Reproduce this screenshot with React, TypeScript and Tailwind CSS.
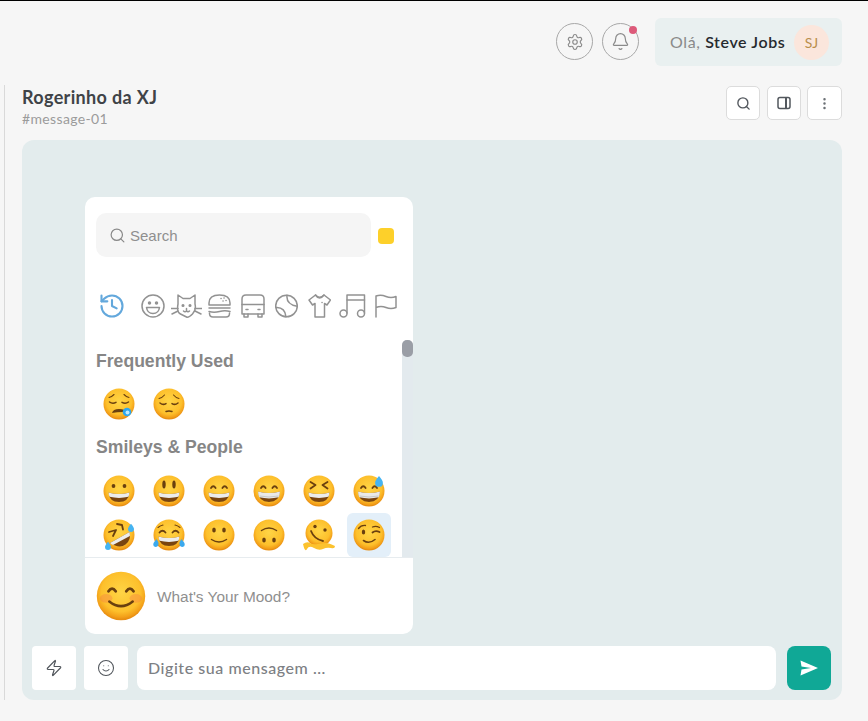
import React, { useId } from "react";
import { Settings, Bell, Search, EllipsisVertical, Zap, Smile, History } from "lucide-react";

type Kind = "sleepy" | "pensive" | "grin" | "smiley" | "smileEyes" | "beam" | "squint" | "sweat" | "rofl" | "joy" | "slight" | "upside" | "melt" | "wink" | "blush";

const ink = "#6a400f";

function Mouth() {
  return (
    <g>
      <path d="M5.500 17.500q10.500 3 21 0q-.8 9.500-10.500 9.500t-10.500-9.500Z" fill="#7a4510" />
      <path d="M5.500 17.500q10.500 3 21 0q-.2 2.500-1.100 4.300q-9.400 2.200-18.800 0q-.9-1.800-1.100-4.300Z" fill="#ececec" />
    </g>
  );
}

function BigMouth() {
  return (
    <g>
      <path d="M5 16.500q11 3 22 0q-.5 10.500-11 10.500t-11-10.500Z" fill="#7a4510" />
      <path d="M5 16.500q11 3 22 0q-.1 3.500-1.300 5.800q-9.700 2.200-19.400 0q-1.200-2.300-1.300-5.800Z" fill="#e9e9e9" />
      <path d="M6.500 21q9.500 2 19 0" fill="none" stroke="#b9b9b9" strokeWidth=".7" />
    </g>
  );
}

function HappyEyes() {
  return (
    <g fill="none" stroke={ink} strokeWidth="1.800" strokeLinecap="round">
      <path d="M8 13q2.300-3.500 4.600 0" />
      <path d="M19.400 13q2.300-3.500 4.600 0" />
    </g>
  );
}

function Tear({ x, y, s = 1 }: { x: number; y: number; s?: number }) {
  return (
    <path
      transform={`translate(${x} ${y}) scale(${s})`}
      d="M0-4.200C1.800-1.800 3-.5 3 1.100A3 3 0 0 1-3 1.100C-3-.5-1.800-1.800 0-4.200Z"
      fill="#45b4f2"
    />
  );
}

function Face({ kind, size = 32 }: { kind: Kind; size?: number }) {
  const id = useId();
  return (
    <svg width={size} height={size} viewBox="0 0 32 32" className="block shrink-0">
      <defs>
        <radialGradient id={id} cx="50%" cy="42%" r="56%">
          <stop offset="0%" stopColor="#ffd546" />
          <stop offset="72%" stopColor="#fdc02c" />
          <stop offset="92%" stopColor="#f3a019" />
          <stop offset="100%" stopColor="#e88e12" />
        </radialGradient>
      </defs>
      {kind === "melt" ? (
        <g>
          <circle cx="16" cy="14" r="13.500" fill={`url(#${id})`} />
          <path d="M0 25q4-3 7-1t8 1 8-1 9 3q0 3-4 2t-8 1-9-1-7 1-4-5Z" fill="#fcc22e" />
          <circle cx="12" cy="7.500" r="1.700" fill={ink} />
          <circle cx="22" cy="11" r="1.700" fill={ink} />
          <path d="M8 12q3 8 12 10" fill="none" stroke={ink} strokeWidth="1.800" strokeLinecap="round" />
        </g>
      ) : (
        <circle cx="16" cy="16" r="15.500" fill={`url(#${id})`} />
      )}
      {kind === "sleepy" && (
        <g>
          <g fill="none" stroke={ink} strokeWidth="1.500" strokeLinecap="round">
            <path d="M6.500 14q3 2.200 6.500.4" />
            <path d="M19 14.400q3.500 1.800 6.500-.4" />
            <path d="M6 9.500q2.500-.5 5-3M26 9.500q-2.500-.5-5-3" strokeWidth="1.100" />
          </g>
          <path d="M9 25q1-4 7-4t7 3q-7-.5-14 1Z" fill={ink} />
          <circle cx="24" cy="24" r="4.300" fill="#2fa7ee" />
          <circle cx="24.500" cy="24.500" r="2" fill="#bfeaff" />
        </g>
      )}
      {kind === "pensive" && (
        <g fill="none" stroke={ink} strokeWidth="1.500" strokeLinecap="round">
          <path d="M7 15q3 2.400 6 .6" />
          <path d="M19 15.600q3 1.800 6-.6" />
          <path d="M6 10.500q3-.5 5.500-3.500M26 10.500q-3-.5-5.500-3.500" strokeWidth="1.100" />
          <path d="M13 23.500q3-1.200 6 0" />
        </g>
      )}
      {kind === "grin" && (
        <g>
          <circle cx="10.500" cy="11" r="1.900" fill={ink} />
          <circle cx="21.500" cy="11" r="1.900" fill={ink} />
          <Mouth />
        </g>
      )}
      {kind === "smiley" && (
        <g>
          <ellipse cx="11" cy="9.500" rx="1.700" ry="3.900" fill={ink} />
          <ellipse cx="21" cy="9.500" rx="1.700" ry="3.900" fill={ink} />
          <Mouth />
        </g>
      )}
      {kind === "smileEyes" && (
        <g>
          <HappyEyes />
          <Mouth />
        </g>
      )}
      {kind === "beam" && (
        <g>
          <HappyEyes />
          <BigMouth />
        </g>
      )}
      {kind === "squint" && (
        <g>
          <g fill="none" stroke={ink} strokeWidth="1.800" strokeLinecap="round" strokeLinejoin="round">
            <path d="M7.500 7l5 3-5 3.500" />
            <path d="M24.500 7l-5 3 5 3.500" />
          </g>
          <Mouth />
        </g>
      )}
      {kind === "sweat" && (
        <g>
          <HappyEyes />
          <BigMouth />
          <Tear x={26} y={6.500} s={1.300} />
        </g>
      )}
      {kind === "rofl" && (
        <g>
          <g fill="none" stroke={ink} strokeWidth="1.800" strokeLinecap="round" strokeLinejoin="round">
            <path d="M6 13l7-2-3 6" />
            <path d="M14 5l5 1 1 4.500" />
          </g>
          <path d="M7 24L26.500 13q2 8-4 12.500t-15.500-1.500Z" fill="#7a4510" />
          <path d="M7 24L26.500 13q.6 2 .4 4L10 26q-2-1-3-2Z" fill="#ececec" />
          <Tear x={28} y={9} s={1} />
          <Tear x={5} y={27} s={1} />
        </g>
      )}
      {kind === "joy" && (
        <g>
          <g fill="none" stroke={ink} strokeWidth="1.800" strokeLinecap="round">
            <path d="M6.500 13.500q3-3.500 6 0" />
            <path d="M19.500 13.500q3-3.500 6 0" />
            <path d="M5 8.500q2.500-2 5-2.500M27 8.500q-2.500-2-5-2.500" strokeWidth="1.100" />
          </g>
          <Mouth />
          <path d="M3.500 20c-1.500 2.500-4 4-3 6.500s5 1.500 5-1.500-1-3-2-5Z" fill="#3ba9ee" />
          <path d="M28.500 20c1.500 2.500 4 4 3 6.500s-5 1.500-5-1.500 1-3 2-5Z" fill="#3ba9ee" />
        </g>
      )}
      {kind === "slight" && (
        <g>
          <ellipse cx="11" cy="11" rx="1.800" ry="2.500" fill={ink} />
          <ellipse cx="21" cy="11" rx="1.800" ry="2.500" fill={ink} />
          <path d="M8.500 20.500q7.500 5 15 0" fill="none" stroke={ink} strokeWidth="1.500" strokeLinecap="round" />
        </g>
      )}
      {kind === "upside" && (
        <g>
          <ellipse cx="11" cy="21" rx="1.800" ry="2.500" fill={ink} />
          <ellipse cx="21" cy="21" rx="1.800" ry="2.500" fill={ink} />
          <path d="M8.500 11.500q7.500-5 15 0" fill="none" stroke={ink} strokeWidth="1.500" strokeLinecap="round" />
        </g>
      )}
      {kind === "wink" && (
        <g>
          <g fill="none" stroke={ink} strokeLinecap="round">
            <path d="M5.500 9.500q2.500-3.500 7-3" strokeWidth="1.300" />
            <path d="M19.500 13.500q3-2.500 7-.5" strokeWidth="1.800" />
            <path d="M19.500 8q3.500-1.500 7 .5" strokeWidth="1.300" />
            <path d="M10.500 21.500q5.500 4 11.500-1" strokeWidth="1.600" />
          </g>
          <ellipse cx="10.500" cy="13" rx="1.700" ry="2.500" fill={ink} />
        </g>
      )}
      {kind === "blush" && (
        <g>
          <ellipse cx="6.500" cy="17.500" rx="4" ry="2.800" fill="#f4794a" opacity=".35" />
          <ellipse cx="25.500" cy="17.500" rx="4" ry="2.800" fill="#f4794a" opacity=".35" />
          <HappyEyes />
          <path d="M8.500 19.500q7.500 6 15 0" fill="none" stroke={ink} strokeWidth="1.600" strokeLinecap="round" />
        </g>
      )}
    </svg>
  );
}

const gray = "#929292";

function CatIcons() {
  const p = { fill: "none", stroke: gray, strokeWidth: 1.500, strokeLinecap: "round" as const, strokeLinejoin: "round" as const };
  return (
    <div className="flex items-center h-[28px]">
      <History size={28} color="#63a8dc" strokeWidth={1.800} className="shrink-0" />
      <svg width="24" height="24" viewBox="0 0 24 24" className="ml-[15px] shrink-0" {...p}>
        <circle cx="12" cy="12" r="11" />
        <circle cx="8.500" cy="9" r="1" fill={gray} />
        <circle cx="15.500" cy="9" r="1" fill={gray} />
        <path d="M5.500 13.500h13q-.8 6-6.500 6t-6.500-6Z" />
      </svg>
      <svg width="31" height="24" viewBox="0 0 31 24" className="ml-[6px] shrink-0" {...p}>
        <path d="M7 10V1l5 3.500h7L24 1v9q1.500 6-2.500 10T15.500 23t-6-3T7 10Z" />
        <path d="M0 14.500h7M1 20l6-3M31 14.500h-7M30 20l-6-3" />
        <circle cx="12" cy="11.500" r=".8" fill={gray} />
        <circle cx="19" cy="11.500" r=".8" fill={gray} />
        <path d="M12.500 17q1.500 1.500 3 0q1.500 1.500 3 0M15.500 14.500V17" />
      </svg>
      <svg width="23" height="24" viewBox="0 0 23 24" className="ml-[6px] shrink-0" {...p}>
        <path d="M1 11V9q0-8 10.500-8T22 9v2Z" />
        <path d="M1 14h21" />
        <path d="M1 17.500q5 1.500 10.500 0t10.500 0" />
        <path d="M1.500 19v.5q0 3.500 3.500 3.500h13q3.500 0 3.500-3.500V19" />
        <path d="M13 4.500h.1M16 4h.1M18 6.500h.1M15 7h.1" />
      </svg>
      <svg width="24" height="24" viewBox="0 0 24 24" className="ml-[10px] shrink-0" {...p}>
        <path d="M1 20V5q0-4 4-4h14q4 0 4 4v15Z" />
        <path d="M1 10.500h22" />
        <path d="M3 20v3h4v-3M17 20v3h4v-3" />
        <path d="M5 15.500h2M17 15.500h2" />
      </svg>
      <svg width="23" height="24" viewBox="0 0 23 24" className="ml-[10px] shrink-0" {...p}>
        <circle cx="11.500" cy="12" r="10.800" />
        <path d="M12 1.300q-1 9 10.200 11" />
        <path d="M1 13.500q9-.5 10 9.300" />
      </svg>
      <svg width="23" height="24" viewBox="0 0 23 24" className="ml-[10px] shrink-0" {...p}>
        <path d="M7.500 1L1 6l3.500 5 2.500-1.500V23h9.500V9.500L19 11l3.500-5L16 1q-4.500 4.500-8.500 0Z" />
        <path d="M7.500 1q4 6 8.500 0M14 8.500h.1" />
      </svg>
      <svg width="27" height="24" viewBox="0 0 27 24" className="ml-[8px] shrink-0" {...p}>
        <path d="M8 19V1h17.500v18" />
        <path d="M8 6h17.500" />
        <circle cx="4.500" cy="19.500" r="3.500" />
        <circle cx="22" cy="19.500" r="3.500" />
      </svg>
      <svg width="22" height="24" viewBox="0 0 22 24" className="ml-[9px] shrink-0" {...p}>
        <path d="M1 23V2q5-1.500 10 .5t10 0v11q-5 2-10 0t-10 0" />
      </svg>
    </div>
  );
}

function Cell({ kind, active }: { kind: Kind; active?: boolean }) {
  return (
    <div className="w-[50px] h-[44px] flex items-center justify-center">
      <div className={`w-[44px] h-[44px] rounded-[6px] flex items-center justify-center ${active ? "bg-[#e3eff9]" : ""}`}>
        <Face kind={kind} size={32} />
      </div>
    </div>
  );
}

function Picker() {
  const r1: Kind[] = ["sleepy", "pensive"];
  const r2: Kind[] = ["grin", "smiley", "smileEyes", "beam", "squint", "sweat", "rofl", "joy", "slight", "upside", "melt", "wink"];
  return (
    <div className="w-[328px] h-[437px] bg-white rounded-[10px] flex flex-col overflow-hidden font-['Liberation_Sans',sans-serif]">
      <div className="flex items-center gap-[7px] pl-[11px] pt-[16px]">
        <div className="w-[275px] h-[44px] rounded-[10px] bg-[#f5f5f5] flex items-center pl-[13px] gap-[4px]">
          <Search size={17} color="#8a8a8a" strokeWidth={1.700} />
          <span className="text-[15px] leading-[20px] mt-[2px] text-[#8f8f8f]">Search</span>
        </div>
        <div className="w-[16px] h-[16px] mt-[2px] rounded-[4px] bg-[#fdd02a]" />
      </div>
      <div className="pl-[13px] pt-[35px]">
        <CatIcons />
      </div>
      <div className="flex flex-1 min-h-0 mt-[20px]">
        <div className="flex-1 pl-[9px] min-w-0">
          <div className="pl-[2px] h-[20px] flex items-center text-[17.600px] font-bold text-[#868686] mt-[11px]">Frequently Used</div>
          <div className="flex mt-[11px]">
            {r1.map((k) => <Cell key={k} kind={k} />)}
          </div>
          <div className="pl-[2px] h-[20px] flex items-center text-[17.600px] font-bold text-[#868686] mt-[11px]">Smileys &amp; People</div>
          <div className="grid grid-cols-[repeat(6,50px)] mt-[12px]">
            {r2.map((k) => <Cell key={k} kind={k} active={k === "wink"} />)}
          </div>
        </div>
        <div className="w-[11px] bg-[#e3eaee] rounded-t-[5px] shrink-0">
          <div className="w-[11px] h-[17px] rounded-[5px] bg-[#9a9ea6]" />
        </div>
      </div>
      <div className="h-[77px] shrink-0 border-t border-[#e7ecef] flex items-center pl-[11px] gap-[11px]">
        <Face kind="blush" size={50} />
        <span className="text-[15.400px] mt-[1px] text-[#8f8f8f]">What's Your Mood?</span>
      </div>
    </div>
  );
}

export default function App() {
  return (
    <div className="w-[868px] h-[721px] bg-[#f6f6f6] overflow-hidden flex flex-col border-t border-black font-['Lato',sans-serif]">
      <header className="h-[65px] shrink-0 flex items-start justify-end gap-[9px] pr-[26px] pt-[17px]">
        <div className="w-[37px] h-[37px] mt-[5px] rounded-full border border-[#a8a8a8] flex items-center justify-center">
          <Settings size={18} color="#8a8a8a" strokeWidth={1.500} />
        </div>
        <div className="relative w-[37px] h-[37px] mt-[5px] rounded-full border border-[#a8a8a8] flex items-center justify-center">
          <Bell size={19} color="#8a8a8a" strokeWidth={1.500} />
          <span className="absolute right-[1px] top-[2px] w-[8px] h-[8px] rounded-full bg-[#dd5a7a]" />
        </div>
        <div className="ml-[7px] w-[187px] h-[48px] rounded-[6px] bg-[#e9f0f0] flex items-center pl-[15px] pr-[13px] justify-between">
          <span className="text-[16px] text-[#8a8a8a] tracking-[0.6px]">
            Olá, <span className="font-semibold text-[#262a2e]">Steve Jobs</span>
          </span>
          <span className="w-[35px] h-[35px] rounded-full bg-[#fbe6dc] flex items-center justify-center text-[14px] text-[#b98f4c]">SJ</span>
        </div>
      </header>
      <div className="flex-1 min-h-0 flex pl-[4px] pr-[26px] pb-[21px] pt-[19px]">
        <div className="w-px bg-[#d9d9d9] shrink-0" />
        <main className="flex-1 min-w-0 pl-[17px] flex flex-col">
          <div className="h-[55px] shrink-0 flex items-start justify-between">
            <div>
              <div className="text-[18px] leading-[24px] font-bold text-[#3f4347] tracking-[0.35px]">Rogerinho da XJ</div>
              <div className="text-[14px] leading-[18px] mt-[1px] text-[#9b9b9b] tracking-[0.35px]">#message-01</div>
            </div>
            <div className="flex gap-[6px] mt-[1px]">
              <button className="w-[34px] h-[34px] mr-[1px] bg-white border border-[#dcdcdc] rounded-[5px] flex items-center justify-center">
                <Search size={15} color="#53585e" strokeWidth={2.200} />
              </button>
              <button className="w-[34px] h-[34px] bg-white border border-[#dcdcdc] rounded-[5px] flex items-center justify-center">
                <svg width="16" height="16" viewBox="0 0 16 16" fill="none" stroke="#53585e" strokeWidth="1.500">
                  <rect x="2" y="2.500" width="12" height="11" rx="2" />
                  <path d="M10 2.500v11" strokeWidth="2" />
                </svg>
              </button>
              <button className="w-[35px] h-[34px] bg-white border border-[#dcdcdc] rounded-[5px] flex items-center justify-center">
                <EllipsisVertical size={15} color="#6b7075" strokeWidth={2} />
              </button>
            </div>
          </div>
          <section className="flex-1 min-h-0 bg-[#e3eced] rounded-[12px] flex flex-col justify-end">
            <div className="pl-[63px] pb-[12px]">
              <Picker />
            </div>
            <div className="flex items-center pl-[10px] pr-[11px] pb-[10px]">
              <button className="w-[44px] h-[44px] bg-white rounded-[4px] flex items-center justify-center">
                <Zap size={18} color="#50555b" strokeWidth={1.600} />
              </button>
              <button className="ml-[8px] w-[44px] h-[44px] bg-white rounded-[4px] flex items-center justify-center">
                <Smile size={18} color="#50555b" strokeWidth={1.400} />
              </button>
              <div className="ml-[9px] w-[639px] h-[44px] bg-white rounded-[8px] flex items-center pl-[11px] text-[16px] font-medium text-[#7d8084] tracking-[0.55px]">
                Digite sua mensagem ...
              </div>
              <button className="ml-[11px] w-[44px] h-[44px] bg-[#10a896] rounded-[8px] flex items-center justify-center">
                <svg width="18" height="16" viewBox="0 0 18 16">
                  <path d="M0.500 0.500L18 8 .5 15.500 1.500 9.500 11 8 1.500 6.500Z" fill="#fff" />
                </svg>
              </button>
            </div>
          </section>
        </main>
      </div>
    </div>
  );
}
